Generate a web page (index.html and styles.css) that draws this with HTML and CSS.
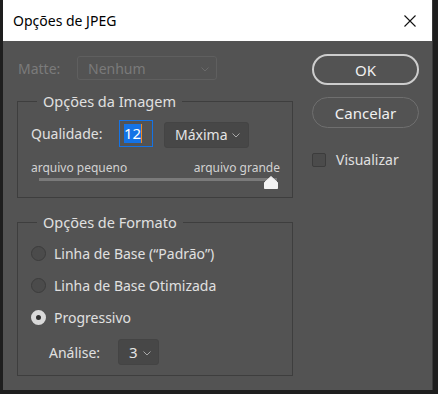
FILE: index.html
```html
<!DOCTYPE html>
<html>
  <head>
    <title>Opções de JPEG</title>
    <link rel="stylesheet" href="styles.css">
  </head>
  <body>
    <div class="window">
      <div class="titlebar">
        <span class="title">Opções de JPEG</span>
        <svg class="close" width="12" height="12" viewBox="0 0 12 12">
          <path d="M0.5 0.5 L11.5 11.5 M11.5 0.5 L0.5 11.5" stroke="#111" stroke-width="1.1" fill="none"/>
        </svg>
      </div>

      <div class="content">
        <div class="main">
          <div class="matte-row">
            <span class="matte-label">Matte:</span>
            <div class="select select-disabled">
              <span>Nenhum</span>
              <svg class="chev" width="8" height="5" viewBox="0 0 8 5"><path d="M0.5 0.5 L4 4 L7.5 0.5" fill="none" stroke="#6a6a6a"/></svg>
            </div>
          </div>

          <fieldset class="group group-image">
            <legend>Opções da Imagem</legend>
            <div class="quality-row">
              <span class="quality-label">Qualidade:</span>
              <div class="num-input"><span class="sel">12</span><span class="caret"></span></div>
              <div class="select select-quality">
                <span>Máxima</span>
                <svg class="chev" width="8" height="5" viewBox="0 0 8 5"><path d="M0.5 0.5 L4 4 L7.5 0.5" fill="none" stroke="#a8a8a8"/></svg>
              </div>
            </div>
            <div class="size-row">
              <span>arquivo pequeno</span>
              <span>arquivo grande</span>
            </div>
            <div class="slider">
              <div class="track"></div>
              <svg class="thumb" width="14" height="13" viewBox="0 0 14 13">
                <path d="M7 0.5 L13.5 6.5 L13.5 12.5 L0.5 12.5 L0.5 6.5 Z" fill="#f2f2f2" stroke="#f2f2f2" stroke-linejoin="round"/>
              </svg>
            </div>
          </fieldset>

          <fieldset class="group group-format">
            <legend>Opções de Formato</legend>
            <div class="radio-row"><span class="radio"></span>Linha de Base (“Padrão”)</div>
            <div class="radio-row"><span class="radio"></span>Linha de Base Otimizada</div>
            <div class="radio-row"><span class="radio checked"></span>Progressivo</div>
            <div class="scan-row">
              <span class="scan-label">Análise:</span>
              <div class="select select-scan">
                <span>3</span>
                <svg class="chev" width="8" height="5" viewBox="0 0 8 5"><path d="M0.5 0.5 L4 4 L7.5 0.5" fill="none" stroke="#a8a8a8"/></svg>
              </div>
            </div>
          </fieldset>
        </div>

        <div class="side">
          <div class="btn btn-ok">OK</div>
          <div class="btn btn-cancel">Cancelar</div>
          <div class="check-row"><span class="checkbox"></span>Visualizar</div>
        </div>
      </div>
    </div>
  </body>
</html>
```

FILE: styles.css
```css
body {
  margin: 0;
  background-color: #1e1e1e;
  font-family: "Noto Sans", "Open Sans", sans-serif;
  font-size: 14px;
  color: #e0e0e0;
}
.window {
  width: 429px;
  height: 390px;
  margin-left: 3px;
  background-color: #535353;
  box-shadow: 1px 0 0 #3a3a3a;
}
.titlebar {
  height: 41px;
  background-color: #fff;
  display: flex;
  align-items: center;
  justify-content: space-between;
  padding: 0 16px 0 10px;
  box-sizing: border-box;
}
.title {
  font-size: 14px;
  color: #000;
}
.content {
  display: flex;
  padding: 15px 0 0 14px;
}
.main {
  width: 276px;
}
.matte-row {
  display: flex;
  align-items: center;
  height: 24px;
}
.matte-label {
  width: 59px;
  padding-left: 1px;
  color: #7b7b7b;
}
.select {
  display: flex;
  align-items: center;
  justify-content: space-between;
  box-sizing: border-box;
  border: 1px solid #444;
  border-radius: 3px;
  background-color: #474747;
  color: #e4e4e4;
}
.chev {
  margin-top: 2px;
}
.select-disabled {
  width: 140px;
  height: 24px;
  padding: 0 7px 0 10px;
  background-color: #535353;
  border-color: #5f5f5f;
  color: #7a7a7a;
}
.group {
  margin: 0;
  border: 1px solid #3e3e3e;
  padding: 0 0 0 13px;
}
.group legend {
  margin-left: 6px;
  padding: 0 6px;
  font-size: 14.5px;
  line-height: 20px;
}
.group-image {
  margin-top: 11px;
  height: 107px;
  box-sizing: border-box;
}
.quality-row {
  display: flex;
  align-items: center;
  margin-top: 8px;
  height: 28px;
}
.quality-label {
  width: 88px;
}
.num-input {
  width: 34px;
  height: 27px;
  box-sizing: border-box;
  border: 1px solid #1473e6;
  display: flex;
  align-items: center;
  padding-left: 4px;
  font-size: 15px;
}
.num-input .sel {
  background-color: #1473e6;
  color: #fff;
  line-height: 19px;
}
.num-input .caret {
  width: 1px;
  height: 19px;
  background-color: #f08a24;
}
.select-quality {
  width: 85px;
  height: 26px;
  margin-left: 11px;
  margin-top: 3px;
  padding: 0 8px 0 10px;
}
.size-row {
  display: flex;
  justify-content: space-between;
  margin-top: 13px;
  padding-right: 12px;
  font-size: 12px;
  line-height: 16px;
  color: #d2d2d2;
}
.slider {
  position: relative;
  height: 12px;
  margin: 2px 15px 0 8px;
}
.track {
  height: 3px;
  background-color: #7a7a7a;
  margin-top: 1px;
}
.thumb {
  position: absolute;
  right: -1px;
  top: -2px;
}
.group-format {
  margin-top: 14px;
  height: 164px;
  box-sizing: border-box;
}
.radio-row {
  display: flex;
  align-items: center;
  height: 32px;
}
.radio-row:first-of-type {
  margin-top: 5px;
}
.radio {
  width: 15px;
  height: 15px;
  box-sizing: border-box;
  border-radius: 50%;
  border: 1px solid #3c3c3c;
  background-color: #4b4b4b;
  margin-right: 8px;
}
.radio.checked {
  border: 5px solid #d9d9d9;
  background-color: #2f2f2f;
}
.scan-row {
  display: flex;
  align-items: center;
  margin-top: 6px;
  padding-left: 18px;
}
.scan-label {
  width: 69px;
}
.select-scan {
  width: 41px;
  height: 26px;
  padding: 0 7px 0 10px;
  font-size: 15px;
}
.side {
  display: flex;
  flex-direction: column;
  margin-left: 19px;
}
.btn {
  width: 107px;
  height: 31px;
  box-sizing: border-box;
  border-radius: 16px;
  display: flex;
  align-items: center;
  justify-content: center;
  font-size: 15px;
  color: #f0f0f0;
}
.btn-ok {
  margin-top: -2px;
  border: 2px solid #cdcdcd;
}
.btn-cancel {
  margin-top: 12px;
  border: 1px solid #6f6f6f;
}
.check-row {
  display: flex;
  align-items: center;
  margin-top: 22px;
}
.checkbox {
  width: 14px;
  height: 14px;
  box-sizing: border-box;
  border: 1px solid #3c3c3c;
  border-radius: 2px;
  background-color: #4b4b4b;
  margin-right: 10px;
}
```
